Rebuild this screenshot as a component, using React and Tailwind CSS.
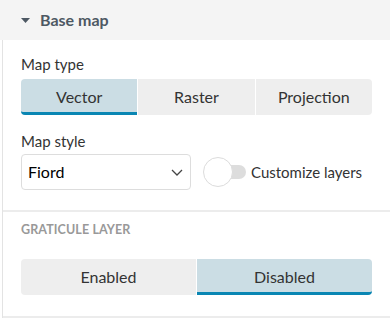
import { useState } from "react";

const Segment = ({ options, active, onChange }) => {
  return (
    <div className="flex w-full gap-px">
      {options.map((opt, i) => (
        <button
          key={opt}
          onClick={() => onChange(opt)}
          className={
            "flex-1 h-9 text-[16px] text-[#333] " +
            (i === 0 ? "rounded-l-[4px] " : "") +
            (i === options.length - 1 ? "rounded-r-[4px] " : "") +
            (opt === active
              ? "bg-[#cbdde4] border-b-[3px] border-[#0a86b3] pt-[3px]"
              : "bg-[#eeeeee]")
          }
        >
          {opt}
        </button>
      ))}
    </div>
  );
};

const App = () => {
  const [mapType, setMapType] = useState("Vector");
  const [graticule, setGraticule] = useState("Disabled");

  return (
    <div className="w-[390px] h-[318px] bg-white font-['Lato','Liberation_Sans',sans-serif]">
      <div className="h-10 bg-[#f4f4f4] flex items-center pl-[21px] gap-[10px]">
        <svg width="9" height="5" viewBox="0 0 9 5" className="mt-[1px]">
          <path d="M0 0 H9 L4.5 5 Z" fill="#4d5863" />
        </svg>
        <span className="text-[16px] font-bold text-[#4d5863]">Base map</span>
      </div>

      <div className="ml-[2px] border-l border-[#e3e3e3]">
        <div className="pl-[18px] pr-[18px] pt-[14px] pb-5 border-b-2 border-[#ececec]">
          <div className="text-[15px] leading-5 text-[#333] mb-[5px]">Map type</div>
          <Segment
            options={["Vector", "Raster", "Projection"]}
            active={mapType}
            onChange={setMapType}
          />

          <div className="text-[15px] leading-5 text-[#333] mt-4 mb-[3px]">Map style</div>
          <div className="flex items-center gap-3">
            <div className="w-[170px] h-9 border border-[#dddddd] rounded-[4px] flex items-center justify-between pl-[6px] pr-[7px]">
              <span className="text-[16px] text-black">Fiord</span>
              <svg width="12" height="7" viewBox="0 0 12 7">
                <path d="M1 1 L6 6 L11 1" fill="none" stroke="#444" strokeWidth="1.3" />
              </svg>
            </div>
            <div className="flex items-center gap-[5px]">
              <div className="relative w-[43px] h-[30px] flex items-center">
                <div className="absolute left-[8px] right-0 h-[14px] rounded-r-full bg-[#dddddd]" />
                <div className="absolute left-0 top-0 w-[30px] h-[30px] rounded-full bg-white border border-[#dcdcdc]" />
              </div>
              <span className="text-[15px] text-[#333]">Customize layers</span>
            </div>
          </div>
        </div>

        <div className="pl-[18px] pr-[18px] pt-[10px] pb-[21px] border-b-2 border-[#ececec]">
          <div className="text-[12.5px] leading-4 font-bold text-[#999] tracking-[0.1px] mb-[21px]">
            GRATICULE LAYER
          </div>
          <Segment
            options={["Enabled", "Disabled"]}
            active={graticule}
            onChange={setGraticule}
          />
        </div>
      </div>
    </div>
  );
};

export default App;
